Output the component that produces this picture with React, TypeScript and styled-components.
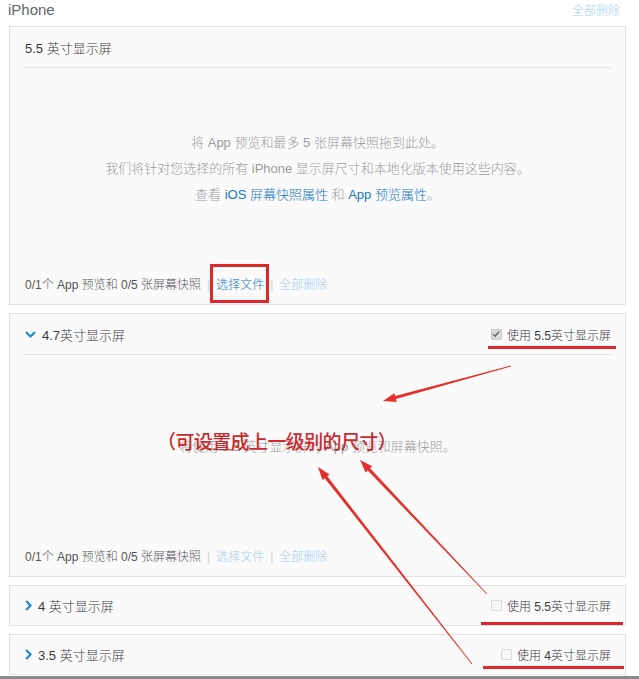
import React from 'react';
import styled, { createGlobalStyle } from 'styled-components';

// *global styles
const GlobalStyle = createGlobalStyle`
  body {
    margin: 0;
    background-color: #fff;
    font-family: "Liberation Sans", "Noto Sans CJK SC", sans-serif;
    font-weight: 300;
    color: #333;
  }
`;

// *styled components
const Page = styled.div`
  position: relative;
  width: 639px;
  height: 679px;
  overflow: hidden;
  padding: 0 13px 0 9px;
  box-sizing: border-box;
`;

const TopBar = styled.div`
  display: flex;
  justify-content: space-between;
  align-items: center;
  height: 19px;
  margin-left: -1px;
  margin-right: 6px;
`;

const PageTitle = styled.span`
  font-size: 15px;
  color: #666;
`;

const TopLink = styled.span`
  font-size: 12px;
  color: #a6d0ef;
`;

const Stack = styled.div`
  display: flex;
  flex-direction: column;
  gap: 8px;
  margin-top: 7px;
`;

const Panel = styled.div`
  background-color: #fafafa;
  border: 1px solid #e2e2e2;
  padding: 0 14px;
`;

const PanelHeader = styled.div<{ $open: boolean }>`
  display: flex;
  align-items: center;
  justify-content: space-between;
  height: ${(p) => (p.$open ? '40px' : '39px')};
  border-bottom: ${(p) => (p.$open ? '1px solid #e4e4e4' : 'none')};
  padding-left: 1px;
`;

const HeaderTitle = styled.div`
  display: flex;
  align-items: center;
  gap: 6px;
  font-size: 13px;
  color: #3a3a3a;
`;

const UseOption = styled.label`
  position: relative;
  display: flex;
  align-items: center;
  gap: 5px;
  font-size: 12px;
  color: #3a3a3a;
`;

const Box = styled.span<{ $checked: boolean }>`
  width: 9px;
  height: 9px;
  border: 1px solid ${(p) => (p.$checked ? '#c8c8c8' : '#d8d8d8')};
  background-color: ${(p) => (p.$checked ? '#dcdcdc' : '#f7f7f7')};
  border-radius: 1px;
  display: flex;
  align-items: center;
  justify-content: center;
`;

const Underline = styled.span<{ $left: number; $right: number; $bottom: number }>`
  position: absolute;
  left: ${(p) => p.$left}px;
  right: ${(p) => p.$right}px;
  bottom: ${(p) => p.$bottom}px;
  height: 3px;
  background-color: #e0282c;
`;

const DropArea = styled.div<{ $pad: number }>`
  padding-top: ${(p) => p.$pad}px;
  text-align: center;
  font-size: 13px;
  line-height: 26px;
  color: #9a9a9a;
`;

const InfoLink = styled.span`
  color: #1577c2;
`;

const Footer = styled.div<{ $gap: number }>`
  display: flex;
  align-items: center;
  gap: 6px;
  margin-top: ${(p) => p.$gap}px;
  padding: 0 1px 9px;
  font-size: 12px;
  line-height: 20px;
  color: #555;
`;

const Sep = styled.span`
  color: #d4d4d4;
`;

const FooterLink = styled.span<{ $active?: boolean }>`
  position: relative;
  color: ${(p) => (p.$active ? '#1677c4' : '#a3cdee')};
`;

const RedBox = styled.span`
  position: absolute;
  left: -6px;
  top: -11px;
  width: 53px;
  height: 33px;
  border: 3px solid #e0282c;
`;

const Note = styled.div`
  position: absolute;
  left: 157px;
  top: 427px;
  font-size: 19px;
  font-weight: 500;
  color: #c92a2d;
  font-family: "Noto Sans CJK SC", sans-serif;
  letter-spacing: -0.6px;
`;

const Arrows = styled.svg`
  position: absolute;
  left: 0;
  top: 0;
  pointer-events: none;
`;

const BottomEdge = styled.div`
  position: absolute;
  left: 0;
  right: 0;
  top: 676px;
  height: 3px;
  background-color: #8a8a8a;
`;

// *icons
const ChevronDown = () => (
  <svg width="11" height="7" viewBox="0 0 11 7">
    <path d="M1 1 L5.5 5.5 L10 1" fill="none" stroke="#1b87cf" strokeWidth="2" />
  </svg>
);

const ChevronRight = () => (
  <svg width="7" height="11" viewBox="0 0 7 11">
    <path d="M1.2 1 L5.5 5.5 L1.2 10" fill="none" stroke="#1b87cf" strokeWidth="2.2" />
  </svg>
);

const Tick = () => (
  <svg width="8" height="8" viewBox="0 0 8 8">
    <path d="M1 4.2 L3.2 6.2 L7 1.5" fill="none" stroke="#666" strokeWidth="1.4" />
  </svg>
);

// tapered red annotation arrow, thin at the tail and fat at the head
const arrowPoints = (tx: number, ty: number, hx: number, hy: number) => {
  const dx = hx - tx;
  const dy = hy - ty;
  const len = Math.hypot(dx, dy);
  const ux = dx / len;
  const uy = dy / len;
  const nx = -uy;
  const ny = ux;
  const nkx = hx - ux * 13;
  const nky = hy - uy * 13;
  const pts = [
    [tx + nx * 0.4, ty + ny * 0.4],
    [nkx + nx * 1.6, nky + ny * 1.6],
    [nkx + nx * 4.5, nky + ny * 4.5],
    [hx, hy],
    [nkx - nx * 4.5, nky - ny * 4.5],
    [nkx - nx * 1.6, nky - ny * 1.6],
    [tx - nx * 0.4, ty - ny * 0.4],
  ];
  return pts.map((p) => p.join(',')).join(' ');
};

const arrows = [
  [511, 366, 383, 401],
  [487, 594, 360, 460],
  [472, 664, 318, 467],
];

interface IPanel {
  title: string;
  open?: boolean;
  option?: { label: string; checked: boolean; line: [number, number, number] };
  children?: React.ReactNode;
}

const ScreenPanel = ({ title, open, option, children }: IPanel) => (
  <Panel>
    <PanelHeader $open={!!open || !option}>
      <HeaderTitle>
        {option && (open ? <ChevronDown /> : <ChevronRight />)}
        {title}
      </HeaderTitle>
      {option && (
        <UseOption>
          <Box $checked={option.checked}>{option.checked && <Tick />}</Box>
          {option.label}
          <Underline $left={option.line[0]} $right={option.line[1]} $bottom={option.line[2]} />
        </UseOption>
      )}
    </PanelHeader>
    {children}
  </Panel>
);

// *Main component
const App = () => {
  return (
    <Page>
      <GlobalStyle />
      <TopBar>
        <PageTitle>iPhone</PageTitle>
        <TopLink>全部删除</TopLink>
      </TopBar>
      <Stack>
        <ScreenPanel title="5.5 英寸显示屏">
          <DropArea $pad={62}>
            <div>将 App 预览和最多 5 张屏幕快照拖到此处。</div>
            <div>我们将针对您选择的所有 iPhone 显示屏尺寸和本地化版本使用这些内容。</div>
            <div>
              查看 <InfoLink>iOS 屏幕快照属性</InfoLink> 和 <InfoLink>App 预览属性</InfoLink>。
            </div>
          </DropArea>
          <Footer $gap={67}>
            0/1个 App 预览和 0/5 张屏幕快照
            <Sep>|</Sep>
            <FooterLink $active>
              选择文件
              <RedBox />
            </FooterLink>
            <Sep>|</Sep>
            <FooterLink>全部删除</FooterLink>
          </Footer>
        </ScreenPanel>
        <ScreenPanel
          title="4.7英寸显示屏"
          open
          option={{ label: '使用 5.5英寸显示屏', checked: true, line: [-3, -5, -6] }}
        >
          <DropArea $pad={79}>
            <div>将使用 5.5 英寸显示屏的 App 预览和屏幕快照。</div>
          </DropArea>
          <Footer $gap={87}>
            0/1个 App 预览和 0/5 张屏幕快照
            <Sep>|</Sep>
            <FooterLink>选择文件</FooterLink>
            <Sep>|</Sep>
            <FooterLink>全部删除</FooterLink>
          </Footer>
        </ScreenPanel>
        <ScreenPanel
          title="4 英寸显示屏"
          option={{ label: '使用 5.5英寸显示屏', checked: false, line: [-10, -12, -11] }}
        />
        <ScreenPanel
          title="3.5 英寸显示屏"
          option={{ label: '使用 4英寸显示屏', checked: false, line: [-18, -13, -6] }}
        />
      </Stack>
      <Note>（可设置成上一级别的尺寸）</Note>
      <Arrows width="639" height="679">
        {arrows.map(([a, b, c, d], i) => (
          <polygon key={i} points={arrowPoints(a, b, c, d)} fill="#e5302c" />
        ))}
      </Arrows>
      <BottomEdge />
    </Page>
  );
};

export default App;
